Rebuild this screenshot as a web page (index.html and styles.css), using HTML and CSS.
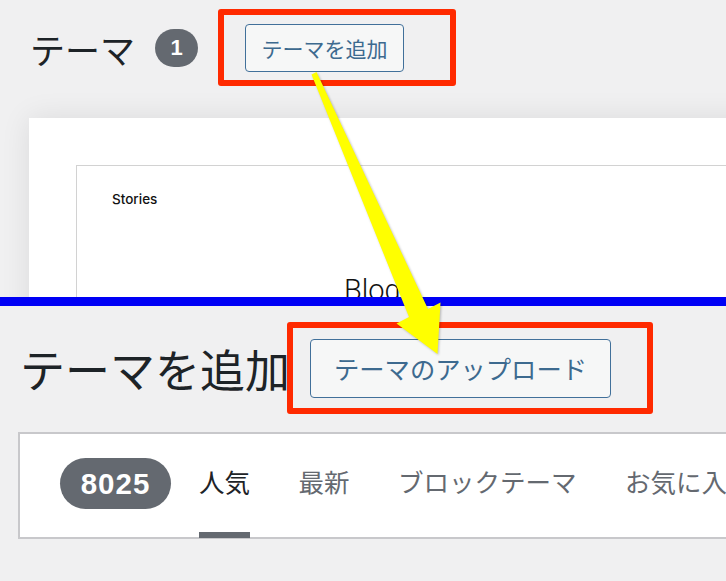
FILE: index.html
```html
<!DOCTYPE html>
<html lang="ja">
<head>
<meta charset="utf-8">
<title>テーマを追加</title>
<link rel="stylesheet" href="styles.css">
</head>
<body>
<div class="page">
  <section class="top">
    <div class="head">
      <h1 class="title">テーマ</h1>
      <span class="count">1</span>
      <a class="btn btn-sm">テーマを追加</a>
    </div>
    <div class="card">
      <div class="preview">
        <div class="site-name">Stories</div>
        <div class="blog">Blog</div>
      </div>
    </div>
  </section>
  <div class="divider"></div>
  <section class="bottom">
    <div class="head2">
      <h1 class="title2">テーマを追加</h1>
      <a class="btn btn-lg">テーマのアップロード</a>
    </div>
    <div class="filter">
      <span class="total">8025</span>
      <ul class="tabs">
        <li class="tab current">人気</li>
        <li class="tab">最新</li>
        <li class="tab">ブロックテーマ</li>
        <li class="tab">お気に入り</li>
      </ul>
    </div>
  </section>
  <div class="annot">
    <div class="redbox redbox-top"></div>
    <div class="redbox redbox-bottom"></div>
    <svg class="arrow" width="726" height="581" viewBox="0 0 726 581" xmlns="http://www.w3.org/2000/svg">
      <polygon points="311.5,74.5 316.5,72 428,309 440.5,302.5 437.5,354 396.5,323.5 409,317" fill="#ffff00"/>
    </svg>
  </div>
</div>
</body>
</html>
```

FILE: styles.css
```css
* { box-sizing: border-box; }
html, body { margin: 0; padding: 0; }
body {
  width: 726px;
  height: 581px;
  overflow: hidden;
  background: #f0f0f1;
  font-family: "Noto Sans CJK JP", "Noto Sans", sans-serif;
  color: #1d2327;
}
.page {
  position: relative;
  width: 726px;
  height: 581px;
  overflow: hidden;
}
.top {
  height: 297px;
  overflow: hidden;
  background: #f0f0f1;
  padding-top: 24px;
}
.head {
  display: flex;
  align-items: center;
  height: 48px;
  padding-left: 30px;
}
.title {
  margin: 0;
  font-size: 35px;
  font-weight: 400;
  line-height: 1;
  color: #1d2327;
}
.count {
  margin-left: 20px;
  width: 43px;
  height: 38px;
  border-radius: 19px;
  background: #646970;
  color: #fff;
  font-family: "Liberation Sans", Arial, sans-serif;
  font-weight: 700;
  font-size: 22px;
  display: flex;
  align-items: center;
  justify-content: center;
}
.btn {
  display: flex;
  align-items: center;
  justify-content: center;
  background: #f6f7f7;
  border: 1.5px solid #41709a;
  border-radius: 4px;
  color: #3d6a8f;
  white-space: nowrap;
  line-height: 1;
}
.btn-sm {
  margin-left: 47px;
  width: 159px;
  height: 48px;
  font-size: 21px;
}
.card {
  margin-top: 46px;
  margin-left: 29px;
  margin-right: -40px;
  height: 300px;
  background: #fff;
  box-shadow: 0 0 28px rgba(0, 0, 0, 0.09);
  padding: 47px 0 0 47px;
}
.preview {
  height: 300px;
  border-top: 1px solid #d2d2d2;
  border-left: 1px solid #d2d2d2;
  padding: 25px 0 0 35px;
}
.site-name {
  font-family: Inter, "Liberation Sans", sans-serif;
  font-size: 13.5px;
  font-weight: 500;
  line-height: 17px;
  color: #111;
}
.blog {
  margin-top: 64px;
  margin-left: 232px;
  font-family: Roboto, "Liberation Sans", sans-serif;
  font-weight: 300;
  font-size: 29px;
  line-height: 36px;
  color: #111;
}
.divider {
  height: 9px;
  background: #0000f5;
}
.bottom {
  height: 275px;
  background: #f0f0f1;
  padding-top: 33px;
}
.head2 {
  display: flex;
  align-items: center;
  height: 59px;
  padding-left: 20px;
}
.title2 {
  margin: 0;
  font-size: 45px;
  font-weight: 400;
  line-height: 1;
  color: #1d2327;
  white-space: nowrap;
}
.btn-lg {
  margin-left: 20px;
  width: 301px;
  height: 59px;
  font-size: 25.3px;
}
.filter {
  margin-top: 34px;
  margin-left: 18px;
  margin-right: -60px;
  height: 107px;
  background: #fff;
  border: 2px solid #c8c8cb;
  display: flex;
  align-items: stretch;
  padding-left: 40px;
}
.total {
  align-self: center;
  margin-top: -4px;
  width: 111px;
  height: 51px;
  border-radius: 26px;
  background: #646970;
  color: #fff;
  font-family: "Liberation Sans", Arial, sans-serif;
  font-weight: 700;
  font-size: 29.5px;
  letter-spacing: 1px;
  display: flex;
  align-items: center;
  justify-content: center;
}
.tabs {
  list-style: none;
  margin: 0 0 0 28px;
  padding: 0;
  display: flex;
  gap: 48.5px;
  white-space: nowrap;
}
.tab {
  display: flex;
  align-items: center;
  padding-bottom: 4px;
  font-size: 25.5px;
  line-height: 1;
  color: #646970;
  border-bottom: 6px solid transparent;
  margin-bottom: -1px;
}
.tab.current {
  color: #1d2327;
  border-bottom-color: #646970;
}
.annot {
  position: absolute;
  inset: 0;
  pointer-events: none;
}
.redbox {
  position: absolute;
  border: 6px solid #ff2a00;
  border-radius: 3px;
}
.redbox-top {
  left: 218px;
  top: 9px;
  width: 238px;
  height: 77px;
}
.redbox-bottom {
  left: 287px;
  top: 322px;
  width: 366px;
  height: 92px;
}
.arrow {
  position: absolute;
  left: 0;
  top: 0;
  filter: drop-shadow(1px 1px 1px rgba(0, 0, 0, 0.25));
}
```
